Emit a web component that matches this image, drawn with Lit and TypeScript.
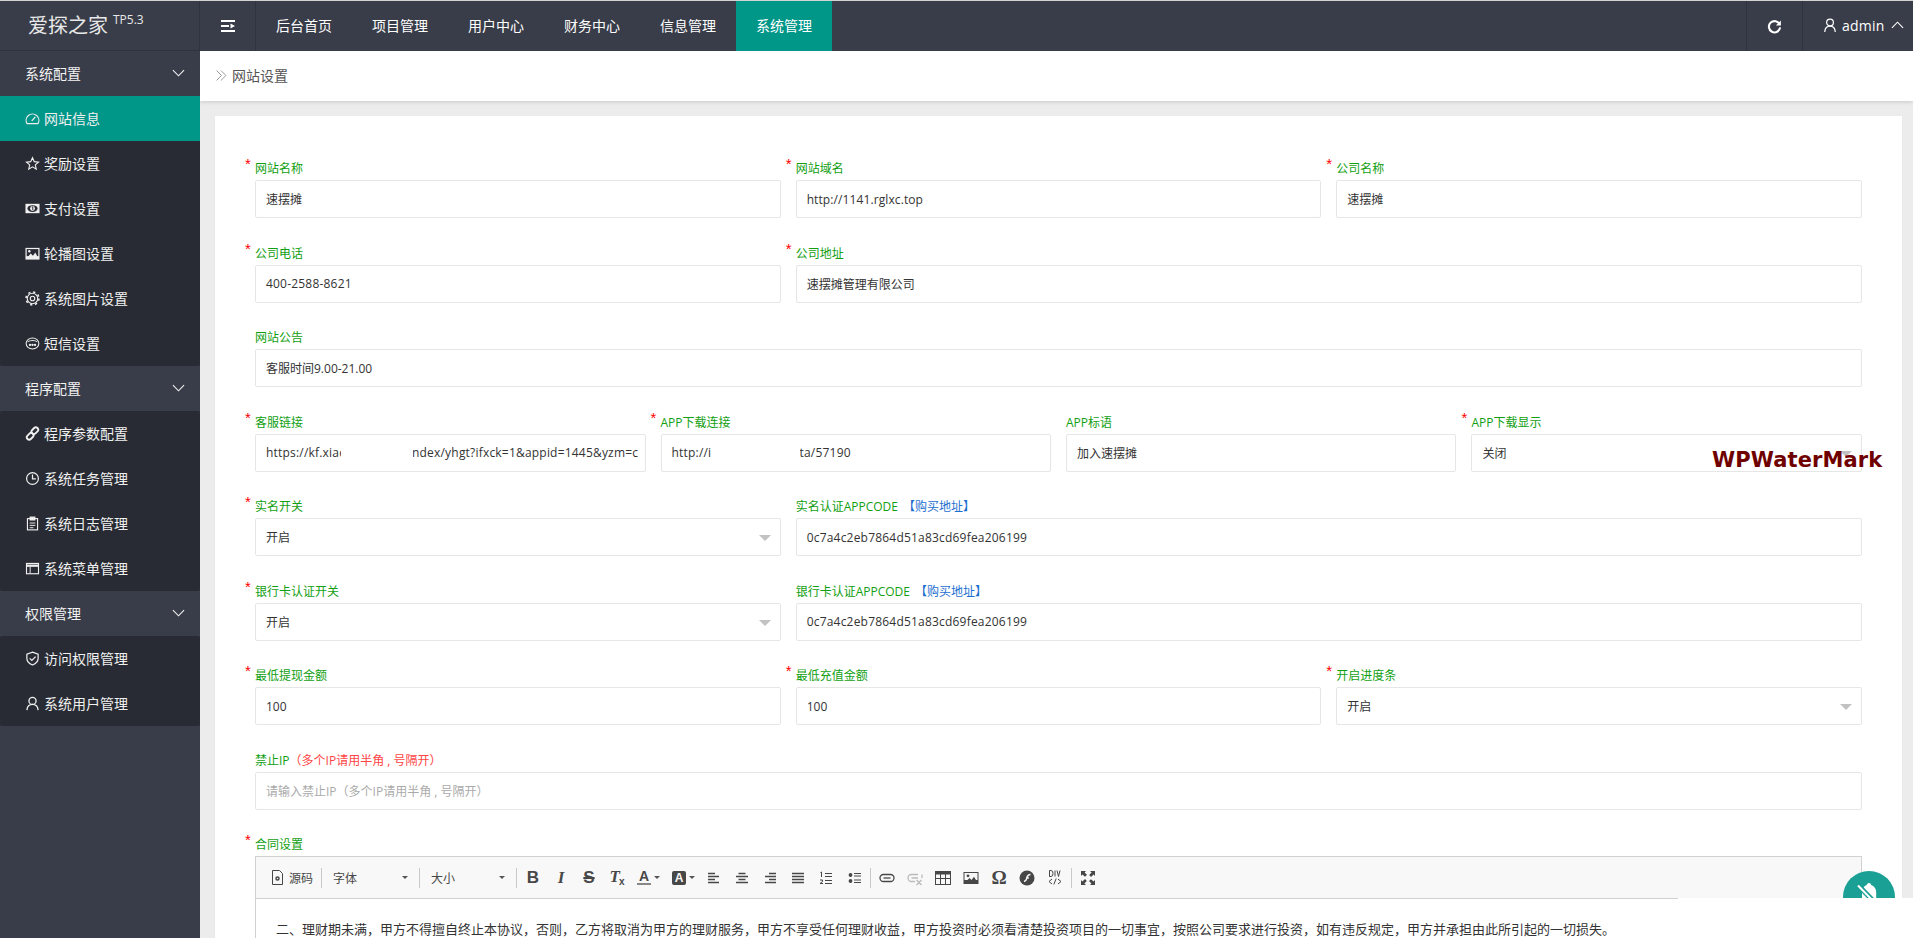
import { LitElement, html, css } from "lit";
import { customElement } from "lit/decorators.js";

const icons = {
  gauge: html`<svg viewBox="0 0 16 16" fill="none" stroke="currentColor" stroke-width="1.2"><path d="M2.2 13.5A6.8 6.8 0 1 1 13.8 13.5Z"/><path d="M7.2 10.5L11 6.2" stroke-width="1.4"/></svg>`,
  star: html`<svg viewBox="0 0 16 16" fill="none" stroke="currentColor" stroke-width="1.2"><path d="M8 1.8l1.9 4.2 4.5.5-3.4 3 1 4.5L8 11.6 4 14l1-4.5-3.4-3 4.5-.5z"/></svg>`,
  money: html`<svg viewBox="0 0 16 16"><rect x="0.5" y="3" width="15" height="10" fill="currentColor"/><ellipse cx="8" cy="8" rx="5.4" ry="3.6" fill="#282b33"/><circle cx="8" cy="8" r="2.6" fill="currentColor"/><path d="M7.3 6.6L8.3 6.2V9.8" stroke="#282b33" fill="none"/></svg>`,
  image: html`<svg viewBox="0 0 16 16"><rect x="0.5" y="2" width="15" height="12.5" fill="currentColor"/><rect x="1.8" y="3.3" width="12.4" height="7.5" fill="#282b33"/><circle cx="4.6" cy="5.6" r="1.3" fill="currentColor"/><path d="M2 13l4-5 2.5 2.5 2.5-3.5 3.2 6z" fill="currentColor"/></svg>`,
  gear: html`<svg viewBox="0 0 16 16" fill="none" stroke="currentColor"><circle cx="8" cy="8" r="5.6" stroke-width="1.2"/><circle cx="8" cy="8" r="6.9" stroke-width="1.6" stroke-dasharray="2.4 3"/><circle cx="8" cy="8" r="2.4" stroke-width="1.2"/></svg>`,
  chat: html`<svg viewBox="0 0 16 16" fill="none" stroke="currentColor" stroke-width="1.1"><ellipse cx="8" cy="8" rx="6.8" ry="5.8"/><path d="M2.8 6.4C5 4.3 11 4.3 13.2 6.4"/><circle cx="5.3" cy="9.4" r=".7" fill="currentColor"/><circle cx="8" cy="9.4" r=".7" fill="currentColor"/><circle cx="10.7" cy="9.4" r=".7" fill="currentColor"/></svg>`,
  link: html`<svg viewBox="0 0 16 16" fill="none" stroke="currentColor" stroke-width="2"><rect x="8" y="1" width="5" height="8" rx="2.5" transform="rotate(45 10.5 5)"/><rect x="3" y="7" width="5" height="8" rx="2.5" transform="rotate(45 5.5 11)"/></svg>`,
  clock: html`<svg viewBox="0 0 16 16" fill="none" stroke="currentColor" stroke-width="1.3"><circle cx="8" cy="8" r="6.3"/><path d="M8 3.8V8.4H11.6"/></svg>`,
  clip: html`<svg viewBox="0 0 16 16" fill="none" stroke="currentColor" stroke-width="1.2"><rect x="2.6" y="2.8" width="10.8" height="12"/><rect x="5.5" y="1.2" width="5" height="3" fill="currentColor"/><path d="M5 7.5H11M5 10H11M5 12.5H9" stroke-width="1"/></svg>`,
  win: html`<svg viewBox="0 0 16 16" fill="none" stroke="currentColor" stroke-width="1.2"><rect x="1.6" y="2.6" width="12.8" height="11"/><path d="M1.6 5H14.4" stroke-width="2.4"/><path d="M5.5 6V13.4" stroke-width="1"/></svg>`,
  shield: html`<svg viewBox="0 0 16 16" fill="none" stroke="currentColor" stroke-width="1.3"><path d="M8 1.2L14 3.4V8c0 3.4-2.8 5.6-6 7-3.2-1.4-6-3.6-6-7V3.4z"/><path d="M5 7.8l2.3 2.3L11.3 6"/></svg>`,
  user: html`<svg viewBox="0 0 16 16" fill="none" stroke="currentColor" stroke-width="1.4"><circle cx="8" cy="5.2" r="3.8"/><path d="M2 15c.4-3.8 2.6-6 6-6s5.6 2.2 6 6"/></svg>`,
};

const chevron = (up = false) => html`<svg class="chev" viewBox="0 0 14 8" fill="none" stroke="currentColor" stroke-width="1.2"><path d=${up ? "M1 7L7 1L13 7" : "M1 1L7 7L13 1"}/></svg>`;

const groups = [
  { title: "系统配置", items: [["gauge", "网站信息", true], ["star", "奖励设置"], ["money", "支付设置"], ["image", "轮播图设置"], ["gear", "系统图片设置"], ["chat", "短信设置"]] },
  { title: "程序配置", items: [["link", "程序参数配置"], ["clock", "系统任务管理"], ["clip", "系统日志管理"], ["win", "系统菜单管理"]] },
  { title: "权限管理", items: [["shield", "访问权限管理"], ["user", "系统用户管理"]] },
] as { title: string; items: [keyof typeof icons, string, boolean?][] }[];

const navItems = ["后台首页", "项目管理", "用户中心", "财务中心", "信息管理", "系统管理"];

const APPCODE = "0c7a4c2eb7864d51a83cd69fea206199";
const CONTRACT = "二、理财期未满，甲方不得擅自终止本协议，否则，乙方将取消为甲方的理财服务，甲方不享受任何理财收益，甲方投资时必须看清楚投资项目的一切事宜，按照公司要求进行投资，如有违反规定，甲方并承担由此所引起的一切损失。";

const caret = html`<i class="caret"></i>`;
const textTools = [
  html`<b class="glyph">B</b>`,
  html`<b class="glyph it">I</b>`,
  html`<b class="glyph strike">S</b>`,
  html`<span class="glyph"><b class="it">T</b><small>x</small></span>`,
];

@customElement("app-root")
export class AppRoot extends LitElement {
  static styles = css`
    :host { display: block; height: 938px; overflow: hidden; position: relative; border-top: 1px solid #d4d4d4; box-sizing: border-box; font-family: "Open Sans", "Noto Sans CJK SC", sans-serif; font-size: 14px; color: #333; background: #ececec; }
    * { box-sizing: border-box; }
    svg { display: block; }
    .shell { display: grid; grid-template-columns: 200px 1fr; grid-template-rows: 50px 1fr; height: 937px; }
    header { grid-column: 1 / 3; display: flex; background: #393d49; color: #fff; }
    .logo { width: 200px; border-right: 1px solid #2f3340; border-bottom: 1px solid #2f3340; padding: 0 0 2px 28px; display: flex; align-items: center; font-size: 20px; color: #e8e8e8; }
    .logo sup { font-size: 12px; margin: -9px 0 0 5px; line-height: 1; }
    .burger { width: 56px; border-right: 1px solid #2f3340; display: flex; align-items: center; justify-content: center; }
    .burger svg { width: 14px; height: 12px; }
    nav { display: flex; flex: 1; }
    nav a { width: 96px; display: flex; align-items: center; justify-content: center; color: #fff; padding-bottom: 2px; }
    nav a.on { background: #009688; }
    .refresh { width: 56px; margin-left: auto; border-left: 1px solid #2f3340; display: flex; align-items: center; justify-content: center; }
    .refresh svg { width: 15px; height: 15px; }
    .user { width: 111px; border-left: 1px solid #2f3340; display: flex; align-items: center; padding: 0 0 2px 21px; gap: 6px; font-weight: 500; letter-spacing: .2px; }
    .user .uic { width: 12px; height: 14px; }
    .chev { width: 13px; height: 8px; }
    .user .chev { margin-left: 1px; }
    aside { background: #393d49; color: #fff; }
    .ghead { height: 45px; display: flex; align-items: center; justify-content: space-between; padding: 0 15px 2px 25px; color: #f2f2f2; }
    .gitems { background: #282b33; border-radius: 2px; }
    .item { height: 45px; display: flex; align-items: center; padding-left: 25px; gap: 4px; color: #f0f0f0; }
    .item span { padding-bottom: 2px; }
    .item svg { width: 15px; height: 15px; }
    .item.on { background: #009688; }
    main { display: flex; flex-direction: column; min-width: 0; overflow: hidden; }
    .crumb { flex: none; height: 50px; background: #fff; box-shadow: 0 1px 4px rgba(0,0,0,.15); display: flex; align-items: center; padding: 0 0 2px 16px; gap: 5px; color: #555; }
    .crumb svg { width: 11px; height: 11px; color: #999; }
    .card { margin: 15px 11px 0 15px; background: #fff; padding: 44px 40px 0; flex: 1; box-shadow: 0 1px 2px rgba(0,0,0,.05); }
    .form { display: grid; grid-template-columns: repeat(12, 1fr); column-gap: 15px; row-gap: 26.5px; }
    .s3 { grid-column: span 3; } .s4 { grid-column: span 4; } .s8 { grid-column: span 8; } .s12 { grid-column: span 12; }
    .field { min-width: 0; }
    label { display: block; position: relative; height: 20px; line-height: 18px; font-size: 12px; color: #12a012; white-space: nowrap; }
    .req::before { content: "*"; position: absolute; left: -10px; top: -4px; color: #f00; font: 15px/16px "Liberation Sans", sans-serif; }
    label a { color: #1e6fd0; margin-left: 2px; }
    label em { font-style: normal; color: #f44; }
    .box { position: relative; height: 38px; border: 1px solid #e6e6e6; border-radius: 2px; padding: 0 0 0 10px; display: flex; align-items: center; font-size: 12px; color: #333; white-space: nowrap; overflow: hidden; background: #fff; }
    .box.lat { letter-spacing: .2px; }
    .box.url { letter-spacing: .1px; }
    .box.ph { color: #aaa; }
    .box .seg { flex: none; }
    .box .c1 { width: 75px; } .box .c2 { width: 71px; } .box .c3 { width: 40px; } .box .c4 { width: 88px; }
    .box.select::after { content: ""; position: absolute; right: 9px; top: 16px; border: 6px solid transparent; border-top-color: #c2c2c2; border-bottom: 0; }
    .patch { position: absolute; bottom: -1px; height: 31px; background: #fff; }
    .p1 { left: 85px; width: 72px; } .p2 { left: 50px; width: 88px; }
    .editor { border: 1px solid #d1d1d1; border-bottom: 0; background: #fff; height: 200px; }
    .tools { height: 42px; background: #f8f8f8; border-bottom: 1px solid #d1d1d1; display: flex; align-items: center; padding-left: 10px; color: #474747; font-size: 12px; }
    .sep { width: 1px; height: 20px; background: #c9c9c9; flex: none; }
    .sep.m1 { margin-left: 1px; } .sep.m2 { margin-left: 2px; }
    .sp { width: 2px; flex: none; }
    .src { width: 55px; display: flex; align-items: center; padding-left: 6px; gap: 6px; }
    .src svg { width: 11px; height: 15px; }
    .combo { width: 97px; padding: 0 11px; display: flex; align-items: center; justify-content: space-between; }
    .combo.n { width: 96px; }
    .caret { display: block; width: 0; height: 0; border: 3px solid transparent; border-top-color: #555; border-bottom: 0; flex: none; }
    .btn { width: 28px; height: 20px; display: flex; align-items: center; justify-content: center; flex: none; }
    .btn svg { width: 16px; height: 16px; }
    .btn.dim { color: #bbb; }
    .btn.c { width: 35px; gap: 3px; }
    .btn.n1 { margin-left: -1px; } .btn.w { width: 29px; }
    .glyph { font: bold 17px/18px "Liberation Sans", sans-serif; color: #474747; }
    .it { font-style: italic; font-family: "Liberation Serif", serif; }
    .strike { text-decoration: line-through; text-decoration-thickness: 1.5px; }
    .glyph small { font: normal bold 10px/10px "Liberation Sans", sans-serif; margin-left: -1px; vertical-align: -3px; }
    .ca { display: block; font: bold 14px/13px "Liberation Sans", sans-serif; border-bottom: 2px solid #888; width: 14px; text-align: center; }
    .cb { display: block; font: bold 12px/14px "Liberation Sans", sans-serif; background: #474747; color: #f8f8f8; width: 14px; height: 14px; border-radius: 2px; text-align: center; }
    .om { font: bold 19px/18px "Liberation Serif", serif; }
    .body { padding: 20px 20px; font-size: 13px; line-height: 20px; color: #333; white-space: nowrap; }
    .mark { position: absolute; left: 1712px; top: 446px; font: bold 21px/26px "DejaVu Sans", sans-serif; color: #6f0000; transform: scaleY(1.05); letter-spacing: .1px; white-space: nowrap; }
    .fab { position: absolute; left: 1843px; top: 870px; width: 52px; height: 52px; border-radius: 50%; background: #1aa094; }
    .fab svg { position: absolute; left: 12px; top: 10px; width: 28px; height: 28px; }
    .blank { position: absolute; left: 1678px; right: 0; top: 897px; bottom: 0; background: #fff; }
  `;

  private field(cls: string, name: string, val: string, req = true, select = false, extra = "") {
    return html`<div class="field ${cls}"><label class=${req ? "req" : ""}>${name}</label><div class="box ${select ? "select" : ""} ${extra}">${val}</div></div>`;
  }

  private codeField(name: string) {
    return html`<div class="field s8"><label>${name} <a>【购买地址】</a></label><div class="box lat">${APPCODE}</div></div>`;
  }

  render() {
    return html`
      <div class="shell">
        <header>
          <div class="logo">爱探之家<sup>TP5.3</sup></div>
          <div class="burger"><svg viewBox="0 0 14 12" fill="#fff"><rect width="14" height="2"/><rect y="5" width="8" height="2"/><path d="M9.5 3.5L14 6L9.5 8.5Z"/><rect y="10" width="14" height="2"/></svg></div>
          <nav>${navItems.map((n, i) => html`<a class=${i === 5 ? "on" : ""}>${n}</a>`)}</nav>
          <div class="refresh"><svg viewBox="0 0 16 16" fill="none" stroke="#fff" stroke-width="2.2"><path d="M13.6 6A6 6 0 1 0 14 9"/><path d="M14.8 1.5V6.8H9.5" fill="#fff" stroke="none"/></svg></div>
          <div class="user"><span class="uic"><svg viewBox="0 0 12 14" fill="none" stroke="currentColor" stroke-width="1.2"><circle cx="6" cy="4.5" r="3.4"/><path d="M.7 14c.3-3.6 2.3-5.800 5.300-5.800s5 2.200 5.300 5.800"/></svg></span>admin${chevron(true)}</div>
        </header>
        <aside>
          ${groups.map((g) => html`
            <div class="ghead">${g.title}${chevron()}</div>
            <div class="gitems">${g.items.map(([ic, t, on]) => html`<div class="item ${on ? "on" : ""}">${icons[ic]}<span>${t}</span></div>`)}</div>`)}
        </aside>
        <main>
          <div class="crumb"><svg viewBox="0 0 10 10" fill="none" stroke="currentColor" stroke-width=".9"><path d="M.5 .5L5 5L.5 9.5M4.5 .5L9 5L4.5 9.5"/></svg>网站设置</div>
          <div class="card">
            <div class="form">
              ${this.field("s4", "网站名称", "速摆摊")}
              ${this.field("s4", "网站域名", "http://1141.rglxc.top", true, false, "url")}
              ${this.field("s4", "公司名称", "速摆摊")}
              ${this.field("s4", "公司电话", "400-2588-8621", true, false, "lat")}
              ${this.field("s8", "公司地址", "速摆摊管理有限公司")}
              ${this.field("s12", "网站公告", "客服时间9.00-21.00", false)}
              <div class="field s3"><label class="req">客服链接</label><div class="box lat"><span class="seg c1">https://kf.xiac</span><span class="seg c2"></span><span>ndex/yhgt?ifxck=1&amp;appid=1445&amp;yzm=c</span><div class="patch p1"></div></div></div>
              <div class="field s3"><label class="req">APP下载连接</label><div class="box lat"><span class="seg c3">http://i</span><span class="seg c4"></span><span>ta/57190</span><div class="patch p2"></div></div></div>
              ${this.field("s3", "APP标语", "加入速摆摊", false)}
              ${this.field("s3", "APP下载显示", "关闭", true, true)}
              ${this.field("s4", "实名开关", "开启", true, true)}
              ${this.codeField("实名认证APPCODE")}
              ${this.field("s4", "银行卡认证开关", "开启", true, true)}
              ${this.codeField("银行卡认证APPCODE")}
              ${this.field("s4", "最低提现金额", "100")}
              ${this.field("s4", "最低充值金额", "100")}
              ${this.field("s4", "开启进度条", "开启", true, true)}
              <div class="field s12"><label>禁止IP<em>（多个IP请用半角 , 号隔开）</em></label><div class="box ph">请输入禁止IP（多个IP请用半角 , 号隔开）</div></div>
              <div class="field s12">
                <label class="req">合同设置</label>
                <div class="editor">
                  <div class="tools">
                    <div class="src"><svg viewBox="0 0 11 15" fill="none" stroke="currentColor"><path d="M.5 .5H7.5L10.5 3.5V14.5H.5Z"/><circle cx="5.5" cy="8.5" r="1.5" stroke-width="1.5"/></svg>源码</div>
                    <i class="sep"></i>
                    <div class="combo"><span>字体</span>${caret}</div>
                    <i class="sep"></i>
                    <div class="combo n"><span>大小</span>${caret}</div>
                    <i class="sep"></i>
                    <div class="sp"></div>
                    ${textTools.map((g) => html`<div class="btn">${g}</div>`)}
                    <div class="btn c"><span class="ca">A</span>${caret}</div>
                    <div class="btn c"><span class="cb">A</span>${caret}</div>
                    <div class="btn n1"><svg viewBox="0 0 16 16" fill="none" stroke="currentColor" stroke-width="1.5"><path d="M2 3.5H9M2 6.5H13M2 9.5H9M2 12.5H13"/></svg></div>
                    <div class="btn"><svg viewBox="0 0 16 16" fill="none" stroke="currentColor" stroke-width="1.5"><path d="M4.5 3.5H11.5M2 6.5H14M4.5 9.5H11.5M2 12.5H14"/></svg></div>
                    <div class="btn"><svg viewBox="0 0 16 16" fill="none" stroke="currentColor" stroke-width="1.5"><path d="M7 3.5H14M3 6.5H14M7 9.5H14M3 12.5H14"/></svg></div>
                    <div class="btn"><svg viewBox="0 0 16 16" fill="none" stroke="currentColor" stroke-width="1.5"><path d="M2 3.5H14M2 6.5H14M2 9.5H14M2 12.5H14"/></svg></div>
                    <div class="btn"><svg viewBox="0 0 16 16" fill="none" stroke="currentColor" stroke-width="1"><path d="M7 3.5H14M7 6.5H14M7 10.5H14M7 13.5H14M2.5 2.5L3.5 2V7M2 10H4.5V11.5L2 13.5H5"/></svg></div>
                    <div class="btn w"><svg viewBox="0 0 16 16" fill="none" stroke="currentColor" stroke-width="1.1"><path d="M7 3.5H14M7 6H14M7 10H14M7 12.5H14"/><circle cx="3.5" cy="5" r="1.9" fill="currentColor" stroke="none"/><circle cx="3.5" cy="11" r="1.9" fill="currentColor" stroke="none"/></svg></div>
                    <i class="sep m1"></i>
                    <div class="sp"></div>
                    <div class="btn"><svg viewBox="0 0 16 16" fill="none" stroke="currentColor" stroke-width="1.3"><rect x="1" y="4.5" width="14" height="7" rx="3.5"/><path d="M4.5 8H11.5"/></svg></div>
                    <div class="btn dim"><svg viewBox="0 0 16 16" fill="none" stroke="currentColor" stroke-width="1.3"><path d="M11 4.5H4.5a3.5 3.5 0 0 0 0 7H8M4.5 8H11M15 4.5V8M9.5 10L14.5 15M14.5 10L9.5 15"/></svg></div>
                    <div class="btn"><svg viewBox="0 0 16 16" fill="none" stroke="currentColor" stroke-width="1"><rect x=".5" y="1.5" width="15" height="13"/><path d="M.5 3H15.5" stroke-width="3"/><path d="M.5 8.5H15.5M5.5 4V14.5M10.5 4V14.5"/></svg></div>
                    <div class="btn"><svg viewBox="0 0 16 16"><rect x=".5" y="2" width="15" height="12" fill="currentColor"/><rect x="1.5" y="3" width="13" height="7" fill="#f8f8f8"/><circle cx="5" cy="5.8" r="1.4" fill="currentColor"/><path d="M2 12.5L6.5 8L8.5 10L11 6.8L14.5 12.5Z" fill="currentColor"/></svg></div>
                    <div class="btn"><span class="glyph om">Ω</span></div>
                    <div class="btn"><svg viewBox="0 0 16 16"><circle cx="8" cy="8" r="7.5" fill="currentColor"/><path d="M5 11.5C7.5 11 7.5 9 8 7.5C8.5 5.5 9.5 4.5 11.5 4.5" fill="none" stroke="#f8f8f8" stroke-width="1.6"/><path d="M7 8H10" stroke="#f8f8f8" stroke-width="1.3"/></svg></div>
                    <div class="btn"><svg viewBox="0 0 16 16" fill="none" stroke="currentColor" stroke-width="1"><path d="M2.5 .5H4Q6 .5 6 3.5T4 6.5H2.5ZM8 .5V6.5M10 .5L11.5 6.5L13 .5M5 9L2 11.5L5 14M11 9L14 11.5L11 14M9.2 8.5L6.8 14.5"/></svg></div>
                    <i class="sep m2"></i>
                    <div class="sp"></div>
                    <div class="btn"><svg viewBox="0 0 16 16" fill="currentColor"><path d="M1 1H6L4.6 2.4L7 4.8L5 6.8L2.4 4.4L1 6ZM15 1V6L13.6 4.6L11 7L9.2 5L11.6 2.4L10 1ZM1 15V10L2.4 11.4L5 9L6.8 11L4.4 13.6L6 15ZM15 15H10L11.4 13.6L9 11L11 9.2L13.6 11.6L15 10Z"/></svg></div>
                  </div>
                  <div class="body">${CONTRACT}</div>
                </div>
              </div>
            </div>
          </div>
        </main>
      </div>
      <div class="fab"><svg viewBox="0 0 28 28"><path d="M14 2c1.5 0 2 1 2.2 2 3 1 5 3.5 5 7.5V20H7V11.5C7 7.5 9 5 11.8 4 12 3 12.5 2 14 2Z" fill="#fff"/><path d="M2 3L24 26" stroke="#1aa094" stroke-width="5"/><path d="M3 4.5L24 26" stroke="#fff" stroke-width="2"/></svg></div>
      <div class="mark">WPWaterMark</div>
      <div class="blank"></div>
    `;
  }
}
